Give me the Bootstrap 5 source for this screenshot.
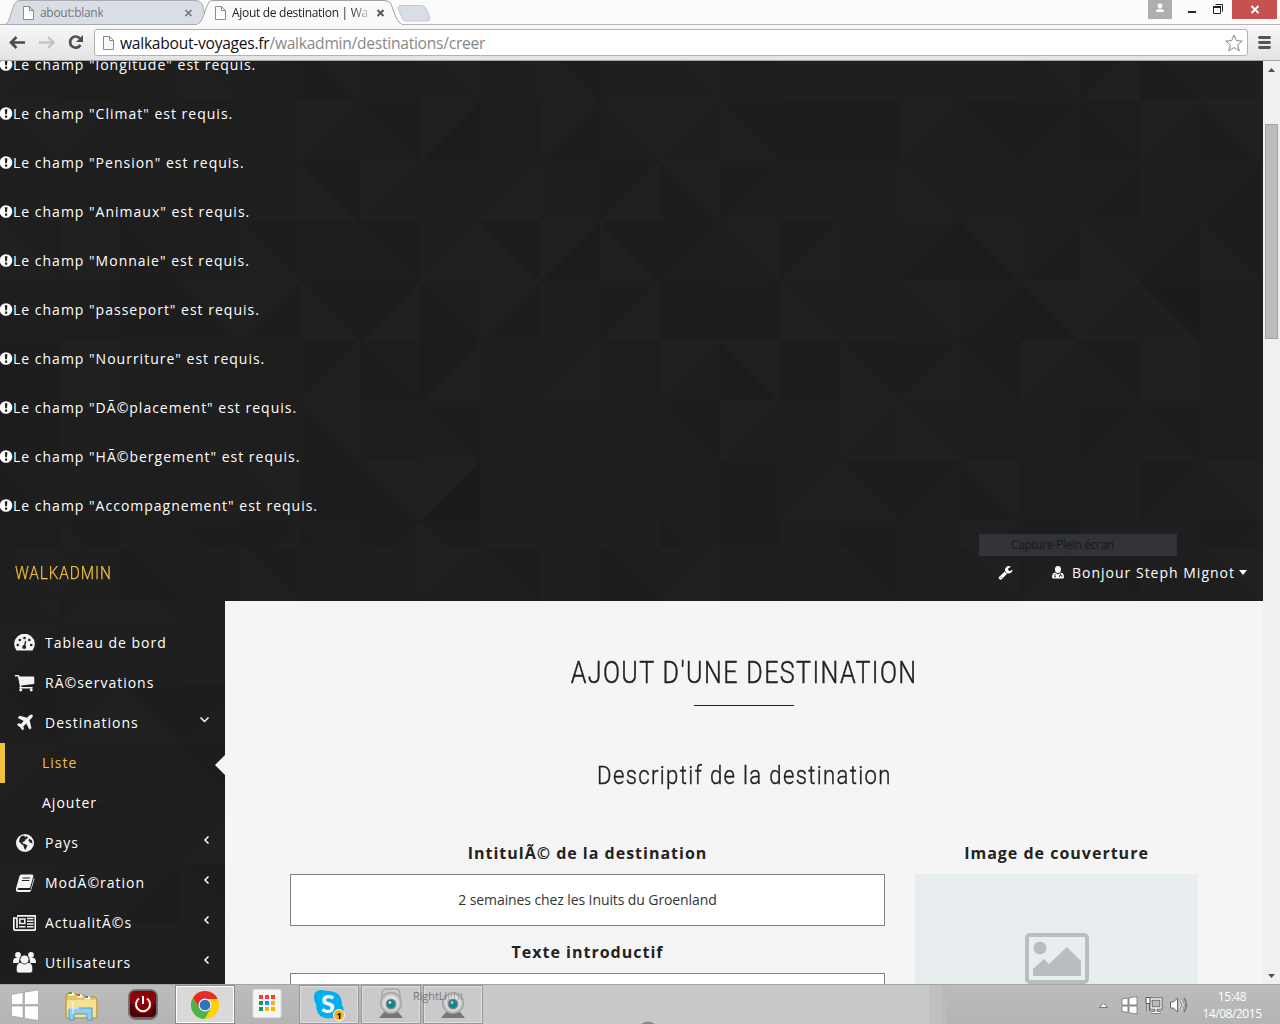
<!DOCTYPE html>
<html lang="fr">
<head>
<meta charset="utf-8">
<title>Ajout de destination | Walkadmin</title>
<link href="https://cdn.jsdelivr.net/npm/bootstrap@5.3.0/dist/css/bootstrap.min.css" rel="stylesheet">
<style>
body{width:1280px;height:1024px;overflow:hidden;background:#f5f5f5;font-family:"Open Sans",sans-serif;font-size:14px;color:#222}
svg{display:block;flex:none}
.chrome-top{height:61px;background:#fbfbfb;border-bottom:1px solid #a5a5a5;font-size:12px;font-family:"Open Sans","Noto Sans",sans-serif}
.tab-strip{height:25px}
.tab-art{position:absolute;left:0;top:0}
.tab-label{position:absolute;top:4px;line-height:18px;white-space:nowrap;overflow:hidden;letter-spacing:-.3px}
.tab-one{left:40px;color:#777}
.tab-two{left:232px;width:137px;color:#222;letter-spacing:-.3px;-webkit-mask-image:linear-gradient(90deg,#000 118px,transparent 142px)}
.tool-row{height:35px;background:linear-gradient(#f8f8f8,#e3e3e3);padding:4px 8px 0 8px}
.url-box{width:1154px;height:27px;margin-left:10px;background:#fff;border:1px solid #b2b2b2;border-radius:3px;font-size:15.6px;letter-spacing:-.26px;line-height:24px;color:#888;padding-left:7px;padding-right:4px}
.url-box .url-text{margin-left:1px}
.url-host{color:#111}
.viewport-area{height:923px}
.page-zone{width:1263px;background:#f5f5f5}
.scroll-zone{width:17px;background:#f0f0f0;padding:7px 0 6px}
.scroll-thumb{width:13px;height:215px;background:#bcbcbc;border:1px solid #a3a3a3;margin-top:52px}
.dark-zone{background:#1f1f1f;color:#fff;letter-spacing:1px}
.facets{position:absolute;left:0;top:0}
.alerts-zone{height:487px}
.alert-lines{position:relative;margin-top:-21px}
.alert-line{height:49px;line-height:49px}
.top-nav{height:53px;padding:0 16px 4px 15px}
.brand-name,.title-main,.title-sub{font-family:Roboto,sans-serif;white-space:nowrap}
.brand-name{color:#f0c040;font-size:18px;font-weight:300;transform:scaleX(.855);transform-origin:left;letter-spacing:1px;-webkit-text-stroke:.25px #f0c040}
.user-ico{margin-left:39px}
.tool-ghost{position:absolute;left:979px;top:473px;width:198px;height:22px;background:rgba(62,65,69,.62);border:1px solid #2c333c;color:#191919;font-size:12px;line-height:20px;padding-left:31px;letter-spacing:-.38px}
.caret-down{border:4.5px solid transparent;border-top:5px solid #fff;border-bottom:0;margin-left:4px}
.side-menu{width:225px;height:383px;padding-top:22px}
.side-item{height:40px;padding:0 15px 2px 14px;position:relative}
.side-item .ico-slot{width:21px;margin-right:10px;display:flex;justify-content:center;padding-top:1px}
.side-child{height:40px;line-height:40px;padding-left:42px;position:relative}
.side-child.current{color:#f0c040;padding-left:37px;border-left:5px solid #f0c040}
.notch{position:absolute;right:0;top:12px;border:10px solid transparent;border-right-color:#f5f5f5;border-left:0}
.content-zone{width:1038px;padding:51px 65px 0;height:383px;overflow:hidden}
.title-main{font-size:31px;line-height:42px;font-weight:300;letter-spacing:1.7px;transform:scaleX(.81);-webkit-text-stroke:.45px #222}
.title-sub{font-size:26.5px;line-height:34px;font-weight:300;letter-spacing:1.6px;transform:scaleX(.835);-webkit-text-stroke:.4px #222}
.title-rule{width:100px;height:1px;background:#222;margin:11px auto 52px}
.form-grid{margin-top:50px}
.left-col{width:595px}
.right-col{width:283px;margin-left:30px}
.field-title{font-weight:700;font-size:16px;line-height:22px;letter-spacing:1px;text-align:center;margin-bottom:10px}
.field-input{height:52px;border:1px solid #808080;border-radius:0;background:#fff;text-align:center;font-size:14px;font-weight:400;color:#333;letter-spacing:-.1px;margin-bottom:15px;box-shadow:none!important;padding-bottom:8px}
.cover-box{background:#e8edf0;height:200px;padding-top:59px}
.task-bar{height:40px;background:linear-gradient(#bcbcbc,#b4b4b4);border-top:1px solid #a4a4a4;position:relative;font-size:12px}
.task-haze{position:absolute;left:483px;top:0;width:464px;height:39px;background:linear-gradient(90deg,#c9c9c9 0 446px,#c0c0c0 446px 458px,#bbb 458px)}
.task-slot{width:60px;height:39px}
.camera-slot{margin-left:2px}
.task-on{background:#cacaca;border:1px solid #979797;box-shadow:inset 0 0 0 1px #dedede}
.task-live{background:#d9d9d9;border:1px solid #8b8b8b;box-shadow:inset 0 0 0 1px #fff}
.ghost-label{position:absolute;left:413px;top:4px;font-size:11px;letter-spacing:-.1px;line-height:14px;color:#777}
.haze-dot{position:absolute;left:641px;bottom:0}
.clock-text{color:#fff;line-height:17px;font-size:12px;width:72px;letter-spacing:-.45px;padding-top:3px}
</style>
<script src="https://cdn.jsdelivr.net/npm/bootstrap@5.3.0/dist/js/bootstrap.bundle.min.js"></script>
</head>
<body>
<header class="chrome-top position-relative">
  <div class="tab-strip position-relative">
    <svg class="tab-art" width="1280" height="25">
      <path d="M0 24.500H1280" stroke="#b4b4b4"/>
      <path d="M5 24.500C10 24 11 8 16 2Q17 .5 20 .5H196Q200 .5 202 4L208 24.500Z" fill="#d9dee6" stroke="#a8abb0"/>
      <path d="M196 25C203 24 205 8 209 2Q210 .5 213 .5H385Q389 .5 391 4C395 14 396 22 403 25Z" fill="#fafafa" stroke="#a2a2a2"/>
      <path d="M197 25H402" stroke="#f8f8f8" stroke-width="2"/>
      <path d="M400 5.500H422Q425 6 427 10L430 18Q430 21 427 21H406Q403 21 402 18L398 8Q398 6 400 5.500Z" fill="#d9dee6" stroke="#c4c8ce"/>
      <g fill="#fff" stroke="#8d8d8d"><path d="M23.500 6.500h6l4 4v9h-10zM29.500 6.500v4h4"/><path d="M215.500 6.500h6l4 4v9h-10zM221.500 6.500v4h4"/></g>
      <path d="M185.500 10l6 6m0-6l-6 6" stroke="#777" stroke-width="1.700"/><path d="M377.500 10l6 6m0-6l-6 6" stroke="#555" stroke-width="1.900"/>
      <path d="M1148 0h24v19h-24z" fill="#aeaeae"/><circle cx="1160" cy="6" r="2.400" fill="#fff"/><path d="M1156 12q0-3 4-3t4 3z" fill="#fff"/>
      <path d="M1188 11h8v2h-8z" fill="#222"/><path d="M1213.500 7.500h7v6h-7zM1215.500 4.500h7v7" fill="none" stroke="#222"/><path d="M1213 7h8" stroke="#222" stroke-width="2"/>
      <path d="M1232 0h45v19h-45z" fill="#c75050"/><path d="M1251.500 6l7 7m0-7l-7 7" stroke="#fff" stroke-width="1.900"/>
    </svg>
    <span class="tab-label tab-one">about:blank</span>
    <span class="tab-label tab-two">Ajout de destination | Walk</span>
  </div>
  <div class="tool-row d-flex align-items-start">
    <svg width="76" height="27" fill="none"><path d="M17 13.500H3M8.500 8L3 13.500l5.500 5.500" stroke="#4c4c4c" stroke-width="2.600"/><path d="M31 13.500h14M40 8l5.500 5.500L40 19" stroke="#c3c3c3" stroke-width="2.400"/><path d="M72.500 16A5.600 5.600 0 1 1 72 9.500" stroke="#4f4f4f" stroke-width="2.700"/><path d="M75 6v7h-7z" fill="#4f4f4f"/></svg>
    <div class="url-box d-flex align-items-center">
      <svg width="13" height="16" class="me-1"><path d="M1.500 1.500h6l4 4v9h-10zM7.500 1.500v4h4" fill="#f8f8f8" stroke="#888"/></svg>
      <span class="flex-grow-1 url-text"><span class="url-host">walkabout-voyages.fr</span>/walkadmin/destinations/creer</span>
      <svg width="18" height="18" viewBox="0 0 18 18"><path d="M9 1l2.300 5.700 6 .3-4.700 3.900 1.700 5.900L9 13.500l-5.300 3.300 1.700-5.900L.7 7l6-.3z" fill="#fff" stroke="#888" stroke-linejoin="round"/></svg>
    </div>
    <svg width="24" height="27"><path d="M11.500 8.500h10M11.500 13.500h10M11.500 18.500h10" stroke="#555" stroke-width="2.800" stroke-linecap="round"/></svg>
  </div>
</header>

<main class="viewport-area d-flex">
  <div class="page-zone position-relative overflow-hidden">
    <section class="dark-zone alerts-zone position-relative overflow-hidden">
      <svg class="facets" id="facets-alerts" width="1263" height="487"></svg>
      <div class="alert-lines" id="alert-lines"></div>
    </section>
    <nav class="dark-zone top-nav position-relative d-flex align-items-center justify-content-between">
      <svg class="facets" id="facets-nav" width="1263" height="53"></svg>
      <span class="brand-name position-relative">WALKADMIN</span>
      <div class="d-flex align-items-center position-relative">
        <svg width="15" height="15" viewBox="0 0 1792 1792" fill="#fff"><path d="M448 1472q0-26-19-45t-45-19-45 19-19 45 19 45 45 19 45-19 19-45zm644-420l-682 682q-37 37-90 37-52 0-91-37l-106-108q-38-36-38-90 0-53 38-91l681-681q39 98 114.500 173.500t173.500 114.500zm634-435q0 39-23 106-47 134-164.500 217.500t-258.500 83.500q-185 0-316.500-131.500t-131.500-316.500 131.500-316.500 316.500-131.500q58 0 121.500 16.500t107.500 46.500q16 11 16 28t-16 28l-293 169v224l193 107q5-3 79-48.500t135.500-81 70.500-35.500q15 0 23.500 10t8.500 25z"/></svg>
        <svg width="12" height="13" viewBox="0 0 12 13" class="user-ico me-2"><path d="M6 0a3 3 0 0 1 3 3.500c0 2-1.200 3.500-3 3.500s-3-1.500-3-3.500A3 3 0 0 1 6 0zM3 6.500l3 2 3-2q3 .6 3 4.500 0 1.500-1.500 1.500h-9Q0 12.500 0 11q0-3.900 3-4.500z" fill="#fff"/><path d="M3 8v2.500M8.500 7.500v1.500M7.500 11V9.500h2.500V11" stroke="#222" stroke-width=".8" fill="none"/><circle cx="3" cy="10.700" r=".8" fill="#222"/></svg>
        <span>Bonjour Steph Mignot</span><span class="caret-down"></span>
      </div>
    </nav>
    <div class="tool-ghost">Capture Plein écran</div>
    <div class="d-flex">
      <aside class="dark-zone side-menu position-relative overflow-hidden">
        <svg class="facets" id="facets-side" width="225" height="383"></svg>
        <div class="side-item d-flex align-items-center"><span class="ico-slot"><svg width="21" height="17" viewBox="0 0 21 17"><path d="M2.500 16.500A10.300 10.300 0 1 1 18.500 16.500Z" fill="#f4f4f4"/><g fill="#222"><circle cx="3.800" cy="11" r="1.300"/><circle cx="5.800" cy="6" r="1.300"/><circle cx="10.500" cy="4" r="1.300"/><circle cx="15.300" cy="6" r="1.300"/><circle cx="17.200" cy="11" r="1.300"/><circle cx="10.200" cy="13" r="2"/></g><path d="M10.200 13l1.500-6" stroke="#222" stroke-width="1.300"/></svg></span>Tableau de bord</div>
        <div class="side-item d-flex align-items-center"><span class="ico-slot"><svg width="21" height="21" viewBox="0 0 1792 1792" fill="#f4f4f4"><path d="M704 1536q0 52-38 90t-90 38-90-38-38-90 38-90 90-38 90 38 38 90zm896 0q0 52-38 90t-90 38-90-38-38-90 38-90 90-38 90 38 38 90zm128-1088v512q0 24-16.500 42.500t-40.500 21.500l-1044 122q13 60 13 70 0 16-24 64h920q26 0 45 19t19 45-19 45-45 19h-1024q-26 0-45-19t-19-45q0-11 8-31.500t16-36 21.500-40 15.500-29.500l-177-823h-204q-26 0-45-19t-19-45 19-45 45-19h256q16 0 28.500 6.500t19.500 15.500 13 24.500 8 26 5.500 29.500 4.500 26h1201q26 0 45 19t19 45z"/></svg></span>Réservations</div>
        <div class="side-item d-flex align-items-center"><span class="ico-slot"><svg width="20" height="20" viewBox="0 0 1792 1792" fill="#f4f4f4"><path d="M1568 160q44 52 12 148t-108 172l-161 161 160 696q5 19-12 33l-128 96q-7 6-19 6-4 0-7-1-15-3-21-16l-279-508-259 259 53 194q5 17-8 31l-96 96q-9 9-23 9h-2q-15-2-24-13l-189-252-252-189q-11-7-13-23-1-13 9-25l96-97q9-9 23-9 6 0 8 1l194 53 259-259-508-279q-14-8-17-24-2-16 9-27l128-128q14-13 30-8l665 159 160-160q76-76 172-108t148 12z"/></svg></span>Destinations<svg class="ms-auto mb-1" width="11" height="8"><path d="M1.500 1.500l4 4 4-4" fill="none" stroke="#fff" stroke-width="1.500"/></svg></div>
        <div class="side-child current">Liste<span class="notch"></span></div>
        <div class="side-child">Ajouter</div>
        <div class="side-item d-flex align-items-center"><span class="ico-slot"><svg width="18" height="18" viewBox="0 0 18 18"><circle cx="9" cy="9" r="9" fill="#f4f4f4"/><path d="M5 2.200l3-.7 1 1.500 2-.8 1 1.800-2.500 1.500-1 2-2 .5.500 1.500 2 .5 2.500 1.500-1 2-1 2.500-1.500-2-.5-2.500-2-1.500L3 7.500 3.500 5zM13 4.500l3 2 .5 3-2.500-1-1.500-2z" fill="#222"/></svg></span>Pays<svg class="ms-auto mb-1" width="8" height="10"><path d="M6.500 1.500L3 5 6.500 8.500" fill="none" stroke="#fff" stroke-width="1.500"/></svg></div>
        <div class="side-item d-flex align-items-center"><span class="ico-slot"><svg width="20" height="18" viewBox="0 0 20 18"><path d="M6.500.5H17q1.800 0 1.400 1.800L15 14H4Q2.500 14 2.500 15T4 16h11.500L19 4l.5 1-3.500 11.500q-.5 1.500-2 1.500H3.500Q.3 18 1 14.500L4.500 2Q5 .5 6.500.5z" fill="#f4f4f4"/><path d="M7.500 4H15M6.800 6.500h7.500" stroke="#222" stroke-width="1.100"/></svg></span>Modération<svg class="ms-auto mb-1" width="8" height="10"><path d="M6.500 1.500L3 5 6.500 8.500" fill="none" stroke="#fff" stroke-width="1.500"/></svg></div>
        <div class="side-item d-flex align-items-center"><span class="ico-slot"><svg width="23" height="16" viewBox="0 0 23 16" fill="none" stroke="#f4f4f4" stroke-width="1.700"><path d="M4 .8h18.300v12.700q0 1.700-1.500 1.700H2.500Q.8 15.200.8 13.500V3H4v10"/><path d="M6.800 4h5v4.500h-5zM6 11.800h6.500M14 3.600h6.500M14 6.300h6.500M14 9h6.500M14 11.800h6.500" stroke-width="1.500"/></svg></span>Actualités<svg class="ms-auto mb-1" width="8" height="10"><path d="M6.500 1.500L3 5 6.500 8.500" fill="none" stroke="#fff" stroke-width="1.500"/></svg></div>
        <div class="side-item d-flex align-items-center"><span class="ico-slot"><svg width="23" height="21" viewBox="0 0 23 21" fill="#f4f4f4"><circle cx="5" cy="3" r="2.900"/><circle cx="18" cy="3" r="2.900"/><path d="M0 11q0-5 2.500-5h5q-2 2-1.500 5zM23 11q0-5-2.500-5h-5q2 2 1.500 5z"/><g stroke="#1f1f1f" stroke-width=".8"><path d="M3.200 18q0-7.500 4-7.500h8.600q4 0 4 7.500 0 3-2.500 3H5.700q-2.500 0-2.500-3z"/><circle cx="11.500" cy="7.500" r="4.500"/></g></svg></span>Utilisateurs<svg class="ms-auto mb-1" width="8" height="10"><path d="M6.500 1.500L3 5 6.500 8.500" fill="none" stroke="#fff" stroke-width="1.500"/></svg></div>
      </aside>
      <section class="content-zone">
        <div class="text-center"><span class="title-main d-inline-block">AJOUT D'UNE DESTINATION</span></div>
        <div class="title-rule"></div>
        <div class="text-center"><span class="title-sub d-inline-block">Descriptif de la destination</span></div>
        <div class="form-grid d-flex">
          <div class="left-col">
            <div class="field-title">Intitulé de la destination</div>
            <input class="form-control field-input" value="2 semaines chez les Inuits du Groenland">
            <div class="field-title">Texte introductif</div>
            <div class="field-input"></div>
          </div>
          <div class="right-col">
            <div class="field-title">Image de couverture</div>
            <div class="cover-box"><svg class="mx-auto" width="64" height="51"><rect x="2" y="2" width="60" height="47" rx="3" fill="none" stroke="#b8bdc0" stroke-width="4"/><circle cx="15" cy="15" r="6.500" fill="#b8bdc0"/><path d="M8 43v-7l11-10 5 5L42 14l14 14v15z" fill="#b8bdc0"/></svg></div>
          </div>
        </div>
      </section>
    </div>
  </div>
  <div class="scroll-zone d-flex flex-column align-items-center">
    <svg width="7" height="4"><path d="M0 4L3.500 0 7 4z" fill="#505050"/></svg>
    <div class="scroll-thumb"></div>
    <svg width="7" height="4" class="mt-auto"><path d="M0 0L3.500 4 7 0z" fill="#505050"/></svg>
  </div>
</main>

<footer class="task-bar d-flex">
  <div class="task-haze"></div>
  <svg class="haze-dot" width="14" height="3"><path d="M0 3q7-5 14 0z" fill="#888"/></svg>
  <svg width="175" height="39">
    <path d="M11.500 9.500l11.500-2v12H11.500zM24.500 7.200L38.500 5v14.500h-14zM11.500 21H23v12l-11.500-2zM24.500 21h14v14.500l-14-2.200z" fill="#fff" stroke="#999" stroke-width=".6"/>
    <path d="M66 11q0-3 3-3h6l2 2h7l2 2h8q3 0 3 3v18H66z" fill="#e3c666" stroke="#b2923d"/><path d="M69 9h5M77 11h5M85 13h5" stroke="#fff" stroke-width="3"/><path d="M69 8h3" stroke="#2b2" stroke-width="2"/><path d="M77 10h3" stroke="#d53" stroke-width="2"/><path d="M85 12h3" stroke="#38e" stroke-width="2"/><path d="M67 15h29v17H67z" fill="#f5e193"/><path d="M69 35V23h23v12h-5v-6H74v6z" fill="#8fcdea" stroke="#4a9fca"/><path d="M73 17v12M67 23h12" stroke="#fff"/>
    <rect x="128.500" y="4.500" width="29" height="30" rx="7" fill="#666" stroke="#777"/><rect x="130" y="6" width="26" height="26" rx="5" fill="#880307"/><path d="M130 19h26v8q0 5-5 5h-16q-5 0-5-5z" fill="#500004"/><circle cx="143" cy="19" r="10" fill="#9d0509" opacity=".7"/><path d="M139 13.500a7 7 0 1 0 8 0M143 11v8" fill="none" stroke="#fff" stroke-width="2"/>
  </svg>
  <div class="task-slot task-live d-flex align-items-center justify-content-center">
    <svg width="30" height="30" viewBox="-15 -15 30 30"><circle r="14" fill="#ffd200"/><path d="M-12.100-7A14 14 0 0 1 12.700-6H0L-6 3z" fill="#df2f28"/><path d="M-12.300-6.800A14 14 0 0 0-.5 14L6 3-5 4z" fill="#4bb34a"/><circle r="6.500" fill="#f2f2f2"/><circle r="5.300" fill="#2b76bf"/></svg>
  </div>
  <svg width="64" height="39"><rect x="18" y="4.500" width="28" height="28" rx="1.500" fill="#f6f6f6" stroke="#ddd"/><path d="M24 10h4v4h-4zM30 10h4v4h-4zM36 10h4v4h-4z" fill="#fb3b30"/><path d="M24 16h4v4h-4zM24 22h4v4h-4z" fill="#0a9d58"/><path d="M30 16h4v4h-4z" fill="#1a8cff"/><path d="M36 16h4v4h-4zM30 22h4v4h-4zM36 22h4v4h-4z" fill="#ffb300"/></svg>
  <div class="task-slot task-on">
    <svg width="58" height="37"><path d="M14 11q0-7 7-7 3 0 5 1 16-1 16 14 3 5 1 10-4 6-10 3-17 3-17-14-2-3-2-7z" fill="#00aff0"/><text x="21" y="27" font-size="25" font-weight="900" font-family="Lato,sans-serif" fill="#fff">S</text><circle cx="39" cy="29" r="5.500" fill="#ffad1d" stroke="#fff"/><text x="36.500" y="32.500" font-size="9" font-weight="700" font-family="Open Sans,sans-serif">1</text></svg>
  </div>
  <div class="task-slot task-on camera-slot"></div>
  <div class="task-slot task-on camera-slot"></div>
  <div class="ghost-label">RightLi<span class="opacity-50">ght</span></div>
  <svg width="14" height="39" class="me-2 ms-auto"><path d="M1.500 22.500L5.500 18l4 4.500z" fill="#fff" stroke="#777"/></svg>
  <svg width="68" height="39" fill="#fff"><path d="M2 14l6-1v7H2zM9 12.800l8-1.300V20H9zM2 21h6v6.500l-6-1zM9 21h8v8l-8-1.300z" stroke="#666" stroke-width=".7"/><g fill="none"><path d="M31 14h10v9H31zM36 23v4M31.500 27.500h9M28 19v8" stroke="#555" stroke-width="3"/><path d="M31 14h10v9H31zM36 23v4M31.500 27.500h9M28 19v8" stroke="#fff" stroke-width="1.300"/></g><path d="M26 12.500h4v6h-4z" stroke="#555"/><path d="M50.500 17h3l4-4v14l-4-4h-3z" stroke="#666"/><path d="M60 17q2 3 0 6M62 15q3.500 5 0 10M64 13q5 7 0 14" fill="none" stroke="#777" stroke-width="1.500"/><path d="M59.500 17q2 3 0 6M61.500 15q3.500 5 0 10" fill="none" stroke="#fff"/></svg>
  <div class="clock-text text-center ms-2 me-1">15:48<br>14/08/2015</div><span class="pe-2"></span>
</footer>

<script>
var broken = s => s.replace(/é/g, 'Ã©');
var fields = ['longitude','Climat','Pension','Animaux','Monnaie','passeport','Nourriture','Déplacement','Hébergement','Accompagnement'];
document.getElementById('alert-lines').innerHTML = fields.map(f =>
  '<div class="alert-line d-flex align-items-center"><svg width="13" height="13"><circle cx="6" cy="6.500" r="6.300" fill="#fff"/><path d="M4.800 2.300h2.600l-.4 5H5.200zM5 8.500h2.200v2.200H5z" fill="#1f1f1f"/></svg><span>' + broken('Le champ "' + f + '" est requis.') + '</span></div>').join('');
document.querySelectorAll('.side-item,.field-title').forEach(e => e.childNodes.forEach(n => { if (n.nodeType === 3) n.data = broken(n.data); }));

// Each pair of digits shades the upper and lower triangle of a 60px tile.
function facets(id, top, rows, parity) {
  var out = '';
  rows.forEach((row, r) => row.split(' ').forEach((p, c) => {
    var x = c * 60, y = top + r * 60, X = x + 60, Y = y + 60;
    var g = n => { var v = 26.5 + n * 0.93; return 'rgb(' + v + ',' + v + ',' + v + ')'; };
    var slash = (r + c + parity) % 2 === 0;
    out += `<rect x="${x}" y="${y}" width="60" height="60" fill="${g(p[0])}"/>` +
      `<path d="${slash ? `M${X} ${y}V${Y}H${x}Z` : `M${x} ${y}V${Y}H${X}Z`}" fill="${g(p[1])}"/>`;
  }));
  document.getElementById(id).innerHTML = out;
}
facets('facets-alerts', -20, [
 '65 54 55 56 54 63 44 65 45 36 55 65 44 55 55 55 55 64 36 52 55 55',
 '64 64 45 45 55 65 35 62 44 63 64 65 36 33 33 65 35 35 43 65 73 55',
 '45 44 55 44 45 26 65 55 56 55 36 63 35 55 45 56 55 55 53 55 53 44',
 '46 66 43 44 36 44 34 56 26 62 26 34 65 36 55 52 62 53 46 52 36 44',
 '44 44 33 63 63 36 26 42 63 45 36 33 33 56 55 64 53 62 65 15 45 44',
 '33 66 44 44 44 36 43 26 44 46 45 64 62 32 36 36 25 65 35 66 55 44',
 '33 55 44 55 44 63 54 35 55 55 45 35 64 55 65 56 54 55 35 35 44 44',
 '53 54 44 55 64 33 63 60 44 55 55 54 33 46 36 25 63 44 55 34 64 44',
 '44 36 54 35 35 53 35 36 55 55 55 52 33 55 33 44 63 34 55 55 34 44'], 0);
facets('facets-nav', -7, ['64 55 43 54 36 44 54 65 34 55 43 56 44 55 35 45 64 46 35 54 64 44'], 1);
facets('facets-side', -38, ['65 46 46 45','64 55 54 55','34 46 36 34','64 55 55 34','54 44 55 56','64 55 43 35','53 45 54 45'], 1);

document.querySelectorAll('.camera-slot').forEach((el, i) => {
  el.innerHTML = `<svg width="58" height="37"><defs><radialGradient id="cam${i}"><stop offset="0" stop-color="#fff"/><stop offset=".7" stop-color="#d8d8d8"/><stop offset="1" stop-color="#999"/></radialGradient></defs>
  ${i ? '' : '<path d="M20 15V7q0-4 4-4h10q4 0 4 4v8" fill="none" stroke="#999"/>'}
  <path d="M22 26h14l5 6H17z" fill="#777"/><circle cx="29" cy="17" r="11" fill="url(#cam${i})"/><circle cx="29" cy="18" r="5.500" fill="#888"/><circle cx="29" cy="18" r="4" fill="#12858a"/><circle cx="28" cy="16.500" r="1.300" fill="#bff"/></svg>`;
});
</script>
</body>
</html>
